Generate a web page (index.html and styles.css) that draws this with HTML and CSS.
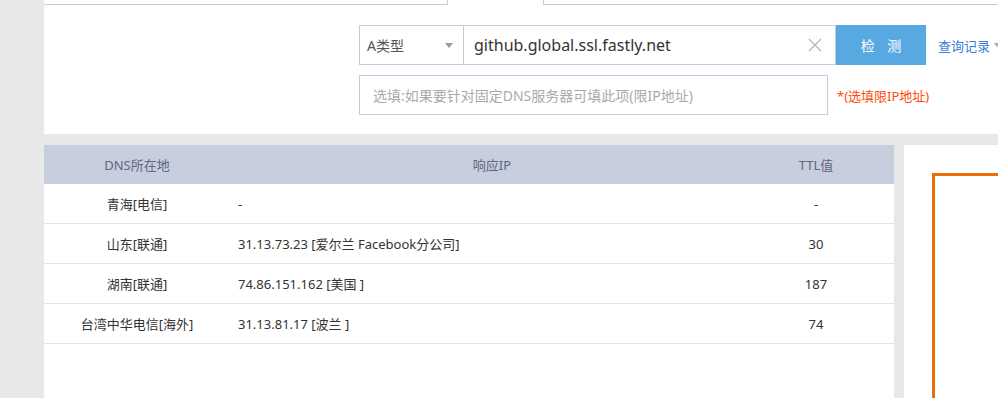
FILE: index.html
```html
<!DOCTYPE html>
<html lang="zh-CN">
<head>
    <meta charset="UTF-8">
    <title>DNS检测</title>
    <link rel="stylesheet" href="styles.css">
</head>
<body>
    <div class="page">
        <div class="search-panel">
            <div class="tabs">
                <div class="tab tab-left"></div>
                <div class="tab tab-active"></div>
                <div class="tab tab-right"></div>
            </div>

            <div class="query-form">
                <div class="form-row">
                    <div class="type-select">
                        <span>A类型</span>
                        <span class="caret"></span>
                    </div>
                    <div class="domain-input">
                        <span class="domain-text">github.global.ssl.fastly.net</span>
                        <svg class="clear-btn" width="14" height="14" viewBox="0 0 14 14">
                            <path d="M1 1 L13 13 M13 1 L1 13" stroke="#b5b5b5" stroke-width="1.2" fill="none"/>
                        </svg>
                    </div>
                    <button class="check-btn">检&nbsp;&nbsp;&nbsp;&nbsp;测</button>
                    <a class="history-link">查询记录<span class="link-caret"></span></a>
                </div>
                <div class="form-row second">
                    <div class="dns-input">选填:如果要针对固定DNS服务器可填此项(限IP地址)</div>
                    <span class="dns-note">*(选填限IP地址)</span>
                </div>
            </div>
        </div>

        <div class="result-area">
            <div class="result-panel">
                <table class="result-table">
                    <thead>
                        <tr>
                            <th class="col-loc">DNS所在地</th>
                            <th class="col-ip">响应IP</th>
                            <th class="col-ttl">TTL值</th>
                        </tr>
                    </thead>
                    <tbody>
                        <tr>
                            <td class="col-loc">青海[电信]</td>
                            <td class="col-ip">-</td>
                            <td class="col-ttl">-</td>
                        </tr>
                        <tr>
                            <td class="col-loc">山东[联通]</td>
                            <td class="col-ip">31.13.73.23 [爱尔兰 Facebook分公司]</td>
                            <td class="col-ttl">30</td>
                        </tr>
                        <tr>
                            <td class="col-loc">湖南[联通]</td>
                            <td class="col-ip">74.86.151.162 [美国 ]</td>
                            <td class="col-ttl">187</td>
                        </tr>
                        <tr>
                            <td class="col-loc">台湾中华电信[海外]</td>
                            <td class="col-ip">31.13.81.17 [波兰 ]</td>
                            <td class="col-ttl">74</td>
                        </tr>
                    </tbody>
                </table>
            </div>
            <div class="side-panel">
                <div class="map-box"></div>
            </div>
        </div>
    </div>
</body>
</html>
```

FILE: styles.css
```css
html, body {
    margin: 0;
    padding: 0;
}
body {
    background: #e8e8e8;
    font-family: "Noto Sans", "Noto Sans CJK SC", sans-serif;
    color: #333;
    width: 998px;
    height: 398px;
    overflow: hidden;
}
.page {
    padding-left: 44px;
}
.search-panel {
    background: #fff;
    height: 134px;
    overflow: hidden;
}
.tabs {
    display: flex;
    height: 5px;
}
.tab {
    box-sizing: border-box;
    height: 5px;
}
.tab-left {
    width: 404px;
    border-bottom: 1px solid #c5cbdc;
    border-right: 1px solid #c5cbdc;
}
.tab-active {
    width: 95px;
}
.tab-right {
    flex: 1;
    border-bottom: 1px solid #c5cbdc;
    border-left: 1px solid #c5cbdc;
}
.query-form {
    margin-left: 315px;
    padding-top: 20px;
}
.form-row {
    display: flex;
    align-items: center;
    height: 40px;
}
.form-row > * {
    flex-shrink: 0;
}
.form-row.second {
    margin-top: 10px;
}
.type-select {
    box-sizing: border-box;
    width: 105px;
    height: 40px;
    border: 1px solid #c5cbdc;
    display: flex;
    align-items: center;
    justify-content: space-between;
    padding: 0 10px 0 7px;
    font-size: 14px;
    color: #555;
}
.caret {
    width: 0;
    height: 0;
    border-left: 4px solid transparent;
    border-right: 4px solid transparent;
    border-top: 5px solid #999;
}
.domain-input {
    box-sizing: border-box;
    width: 372px;
    height: 40px;
    border: 1px solid #c5cbdc;
    border-left: none;
    display: flex;
    align-items: center;
    justify-content: space-between;
    padding: 0 13px 0 10px;
}
.domain-text {
    font-size: 16px;
    color: #333;
}
.check-btn {
    width: 90px;
    height: 40px;
    border: none;
    background: #58a8e2;
    color: #fff;
    font-family: "Noto Sans CJK SC", sans-serif;
    font-size: 14px;
    padding: 0;
}
.history-link {
    margin-left: 12px;
    font-size: 13px;
    color: #3a7fd5;
    display: flex;
    align-items: center;
    white-space: nowrap;
}
.link-caret {
    margin-left: 4px;
    width: 0;
    height: 0;
    border-left: 3px solid transparent;
    border-right: 3px solid transparent;
    border-top: 4px solid #aaa;
}
.dns-input {
    box-sizing: border-box;
    width: 469px;
    height: 40px;
    border: 1px solid #c5cbdc;
    display: flex;
    align-items: center;
    padding-left: 13px;
    font-size: 14px;
    color: #aaa;
}
.dns-note {
    margin-left: 9px;
    font-size: 13px;
    color: #ff4a0a;
}
.result-area {
    display: flex;
    margin-top: 11px;
    height: 253px;
}
.result-panel {
    width: 850px;
    background: #fff;
}
.side-panel {
    flex: 1;
    margin-left: 10px;
    background: #fff;
    padding: 28px 0 0 28px;
    overflow: hidden;
}
.map-box {
    height: 260px;
    border: 3px solid #e96e0a;
    border-right: none;
    border-bottom: none;
}
.result-table {
    width: 100%;
    border-collapse: collapse;
    font-size: 13px;
}
.result-table th {
    background: #c7cedd;
    color: #5f6680;
    font-weight: normal;
    height: 39px;
    padding: 0;
    text-align: center;
}
.result-table td {
    height: 39px;
    padding: 0;
    border-bottom: 1px solid #e4e4e4;
}
.col-loc {
    width: 186px;
    text-align: center;
}
.result-table td.col-ip {
    padding-left: 8px;
    text-align: left;
}
.result-table th.col-ip {
    padding-left: 16px;
}
.col-ttl {
    width: 156px;
    text-align: center;
}
```
